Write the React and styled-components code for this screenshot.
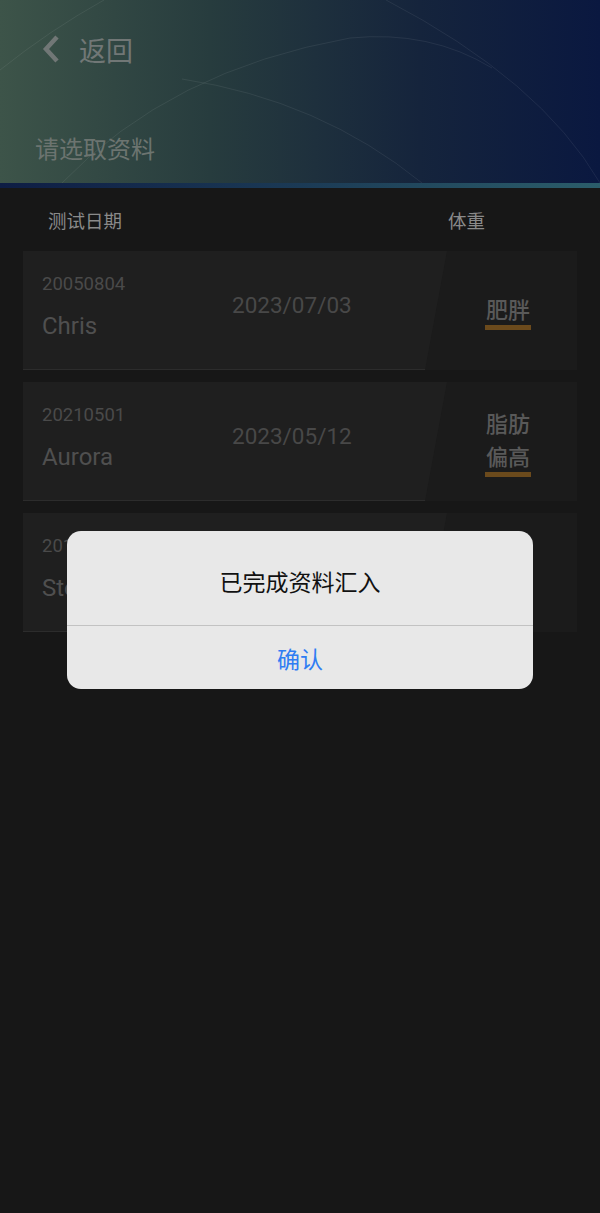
import React from "react";
import styled, { createGlobalStyle } from "styled-components";

const Global = createGlobalStyle`
  html, body { margin: 0; padding: 0; background: #171717; }
  body { font-family: Roboto, "Noto Sans CJK SC", sans-serif; }
  * { box-sizing: border-box; }
`;

const Page = styled.div`
  width: 600px;
  min-height: 1213px;
  background: #171717;
  position: relative;
  overflow: hidden;
`;

const Header = styled.header`
  position: relative;
  height: 183px;
  background: linear-gradient(90deg, #3d5449 0%, #273c3e 35%, #15243c 70%, #0a1840 100%);
  display: flex;
  flex-direction: column;
  padding: 28px 0 0 35px;
`;

const Arcs = styled.svg`
  position: absolute;
  inset: 0;
  pointer-events: none;
`;

const Stripe = styled.div`
  height: 5px;
  background: linear-gradient(90deg, #0e1d44 0%, #1b3a55 50%, #2b5d6a 100%);
`;

const BackRow = styled.div`
  display: flex;
  align-items: center;
  gap: 18px;
  height: 42px;
  padding-left: 6px;
  position: relative;
`;

const BackText = styled.span`
  font-family: "Noto Sans CJK SC", sans-serif;
  font-size: 27px;
  color: #717776;
`;

const Title = styled.h1`
  margin: 60px 0 0 0;
  font-family: "Noto Sans CJK SC", sans-serif;
  font-weight: 400;
  font-size: 24px;
  color: #6c7470;
  position: relative;
`;

const ColHead = styled.div`
  display: flex;
  justify-content: space-between;
  height: 63px;
  align-items: center;
  padding: 0 115px 0 48px;
  font-family: "Noto Sans CJK SC", sans-serif;
  font-size: 18.5px;
  color: #8a8a8a;
`;

const List = styled.div`
  display: flex;
  flex-direction: column;
  gap: 12px;
  padding: 0 23px;
`;

const Card = styled.div`
  position: relative;
  height: 119px;
  background: #1f1f1f;
  display: flex;
  align-items: stretch;
  border-bottom: 1px solid #2c2c2c;
`;

const RightPane = styled.div`
  position: absolute;
  top: 0;
  right: 0;
  bottom: -1px;
  width: 152px;
  background: #1b1b1b;
  clip-path: polygon(22px 0, 100% 0, 100% 100%, 0 100%);
`;

const Left = styled.div`
  width: 209px;
  padding: 22px 0 0 19px;
  display: flex;
  flex-direction: column;
  position: relative;
`;

const Id = styled.div`
  font-size: 18.5px;
  color: #4a4a4a;
  line-height: 22px;
`;

const Name = styled.div`
  font-size: 24px;
  color: #4f4f4f;
  margin-top: 17px;
  line-height: 28px;
`;

const DateText = styled.div`
  font-size: 22.5px;
  color: #484848;
  padding-top: 41px;
  position: relative;
  flex: 1;
`;

const Status = styled.div`
  position: relative;
  width: 138px;
  display: flex;
  flex-direction: column;
  align-items: center;
  justify-content: center;
  padding-top: 1px;
`;

const StatusText = styled.div`
  font-family: "Noto Sans CJK SC", sans-serif;
  font-size: 22px;
  font-weight: 500;
  line-height: 33px;
  color: #595959;
  width: 46px;
  text-align: center;
  border-bottom: 5px solid #6b4a1c;
`;

const Overlay = styled.div`
  position: absolute;
  inset: 0;
  display: flex;
  justify-content: center;
  align-items: flex-start;
  padding-top: 531px;
`;

const Dialog = styled.div`
  width: 466px;
  background: #e8e8e8;
  border-radius: 14px;
  overflow: hidden;
  display: flex;
  flex-direction: column;
`;

const DialogBody = styled.div`
  height: 95px;
  display: flex;
  align-items: center;
  justify-content: center;
  font-family: "Noto Sans CJK SC", sans-serif;
  font-size: 23px;
  color: #111;
  border-bottom: 1.5px solid #c2c2c2;
  padding-top: 6px;
`;

const DialogButton = styled.button`
  height: 63px;
  border: none;
  background: transparent;
  font-family: "Noto Sans CJK SC", sans-serif;
  font-size: 23px;
  color: #2f7df3;
  padding: 0;
`;

const rows = [
  { id: "20050804", name: "Chris", date: "2023/07/03", status: ["肥胖"] },
  { id: "20210501", name: "Aurora", date: "2023/05/12", status: ["脂肪", "偏高"] },
  { id: "20190312", name: "Stella", date: "", status: [] },
];

export default function App() {
  return (
    <Page>
      <Global />
      <Header>
        <Arcs width="600" height="183" viewBox="0 0 600 183">
          <g fill="none" stroke="rgba(255,255,255,0.07)" strokeWidth="1">
            <path d="M0 70 Q 50 30 104 0" />
            <path d="M62 183 Q 170 70 350 38 Q 430 30 492 68" />
            <path d="M182 79 Q 320 100 422 183" />
            <path d="M386 0 Q 540 80 600 183" />
          </g>
        </Arcs>
        <BackRow>
          <svg width="20" height="30" viewBox="0 0 20 30">
            <path d="M16 3 L5 15 L16 27" fill="none" stroke="#717776" strokeWidth="4.5" />
          </svg>
          <BackText>返回</BackText>
        </BackRow>
        <Title>请选取资料</Title>
      </Header>
      <Stripe />
      <ColHead>
        <span>测试日期</span>
        <span>体重</span>
      </ColHead>
      <List>
        {rows.map((r) => (
          <Card key={r.id}>
            <RightPane />
            <Left>
              <Id>{r.id}</Id>
              <Name>{r.name}</Name>
            </Left>
            <DateText>{r.date}</DateText>
            <Status>
              {r.status.length > 0 && (
                <StatusText>
                  {r.status.map((s, i) => (
                    <div key={i}>{s}</div>
                  ))}
                </StatusText>
              )}
            </Status>
          </Card>
        ))}
      </List>
      <Overlay>
        <Dialog>
          <DialogBody>已完成资料汇入</DialogBody>
          <DialogButton>确认</DialogButton>
        </Dialog>
      </Overlay>
    </Page>
  );
}
